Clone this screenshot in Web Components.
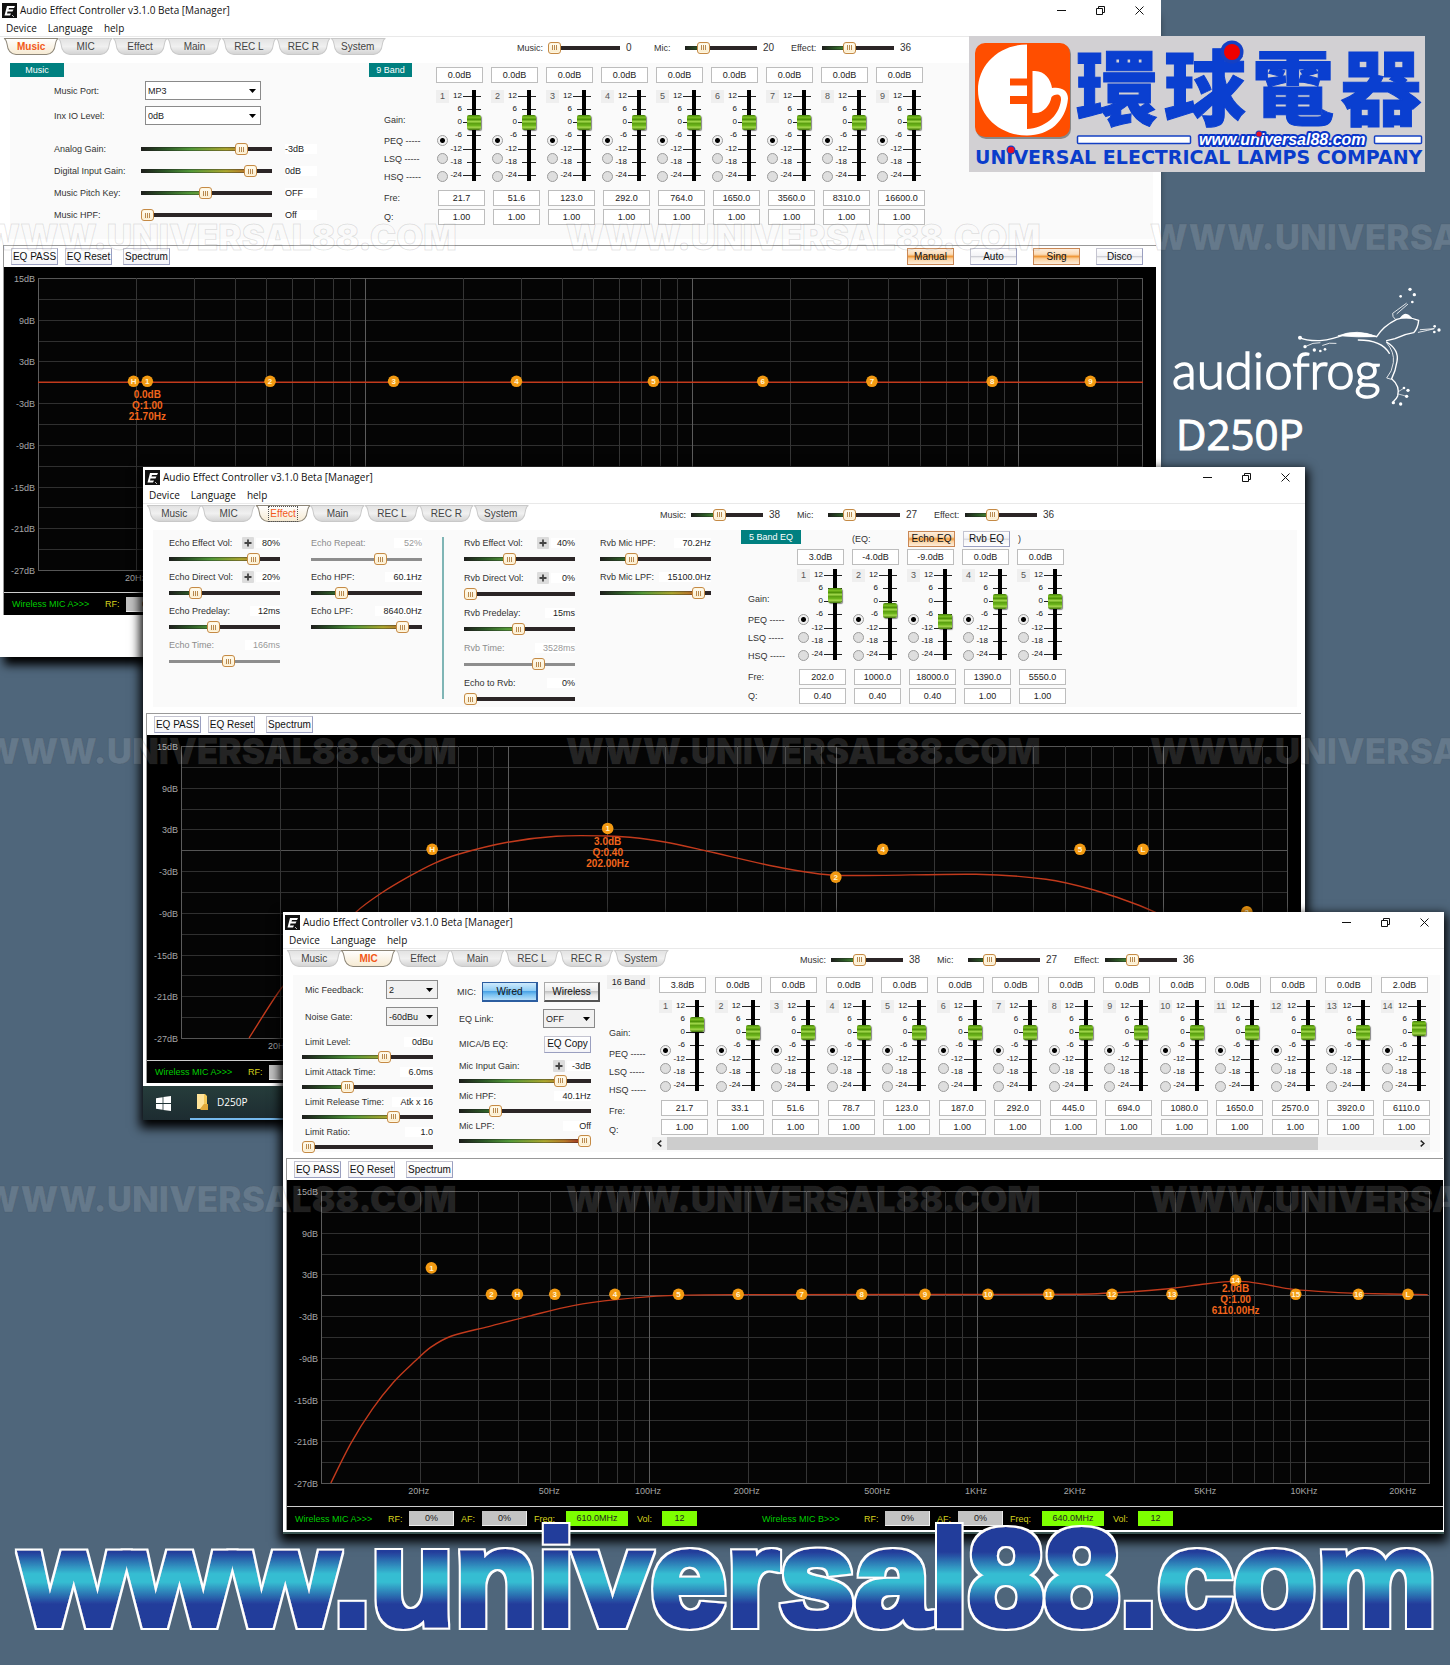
<!DOCTYPE html>
<html lang="en">
<head>
<meta charset="utf-8">
<meta name="viewport" content="width=device-width, initial-scale=1">
<title>Audio Effect Controller</title>
<style>
  html, body { margin: 0; }
  body { background: #4f667b; font-family: "Liberation Sans", Arial, sans-serif; color: #333; }
</style>
</head>
<body>
<fx-desktop></fx-desktop>

<template id="desktop-tpl">
  <style>
    :host { display: grid; position: relative; overflow: hidden; min-height: 100vh; grid-template-columns: minmax(0, 1fr); grid-template-rows: auto; }
    :host > * { grid-area: 1 / 1; }
    .w1 { margin: 0 289px 0 0; align-self: start; --shadow: 0 12px 9px -4px #000; --edge: 5px; --controls: 2px; --panel: 176px; }
    .w2 { margin: 467px 145px 0 143px; align-self: start; --edge: 4px; }
    .w3 { margin: 912px 6px 131px 283px; align-self: start; --edge: 1px; --plot: 326px; --status: 24px; --panel-right: 4px; }
    .side { justify-self: end; align-self: start; width: 282px; margin-top: 285px; display: flex; flex-direction: column; }
    .model { font: 400 42px/48px "Open Sans", sans-serif; color: #fff; margin: 0 0 0 8px; -webkit-text-stroke: 1px #fff; }
    brand-logo { justify-self: end; align-self: start; margin: 36px 25px 0 0; }
    site-banner { align-self: end; }
    fx-panel { align-self: stretch; }
    .col { display: flex; flex-direction: column; gap: var(--g, 2px); }
    .row { display: flex; align-items: center; }
    /* music window */
    .music { width: 359px; }
    .music .rows { display: flex; flex-direction: column; padding: 4px 0 0 44px; gap: 6px; }
    .music .levels { display: flex; flex-direction: column; gap: 2px; margin-top: 8px; }
    .w1 fx-bands { --band-gap: 6px; --label-width: 67px; --label-inset: 15px; height: 162px; }
    /* effect window */
    .effects { width: 588px; display: flex; padding: 5px 0 0 16px; box-sizing: border-box; }
    .w2 .col { width: 111px; }
    .w2 .c2 { margin-left: 31px; }
    .w2 .c3 { margin-left: 20px; --g: 3px; }
    .w2 .c4 { margin-left: 25px; }
    .rule { width: 2px; height: 162px; background: #7fb5b5; margin: 2px 0 0 20px; }
    .w2 .eq { flex: 1; }
    .eqhead { display: flex; align-items: center; height: 17px; font-size: 9px; margin-bottom: 5px; }
    .eqhead fx-badge { align-self: flex-start; }
    .eqhead .lead { margin: 0 38px 0 51px; width: 18px; }
    .eqhead fx-button { width: 47px; height: 16px; margin-right: 8px; }
    .w2 fx-bands { --band-gap: 3px; --label-width: 56px; --label-inset: 7px; height: 152px; }
    /* microphone window */
    .limit { width: 152px; padding: 5px 0 0 9px; box-sizing: border-box; --g: 0; --head: 15px; }
    .limit fx-select { margin: 0 0 8px 3px; --label: 81px; }
    .limit .col { width: 131px; }
    .mic { width: 153px; padding: 7px 0 0 8px; box-sizing: border-box; --head: 15px; --g: 0; }
    .mic .row { font-size: 9px; gap: 6px; height: 20px; }
    .mic .row fx-button { width: 56px; height: 20px; }
    .mic .row span { width: 19px; }
    .mic fx-select { margin: 7px 0 0 2px; --label: 84px; }
    .mic .copy span { flex: 1; }
    .mic .copy { margin: 6px 11px 4px 2px; }
    .mic .copy fx-button { width: 47px; height: 17px; }
    .mic .col { margin-left: 2px; width: 132px; }
    .sixteen { flex: 1; margin-left: 1px; }
    .w3 fx-bands { margin-right: 10px; --band-gap: 6px; --label-width: 52px; --label-inset: 2px; --label-drop: 3px; --spread: space-between; height: 160px; }
    .taskbar { height: 34px; background: linear-gradient(#263d3b, #1d2c31); display: flex; align-items: stretch; margin-top: 3px; font: 10px "Open Sans", sans-serif; color: #fff; }
    .taskbar svg { flex: none; align-self: center; }
    .taskbar .start { width: 47px; display: flex; justify-content: center; padding-right: 7px; box-sizing: border-box; }
    .taskbar .app { display: flex; align-items: center; gap: 7px; border-bottom: 2px solid #76b9ed; padding: 0 140px 0 6px; }
    .sliver { height: 2px; background: #3b5552; }
    .blank { height: 40px; }
  </style>

  <fx-window class="w1" tab="Music" header="0,20,36" header-pos="0,20,35">
    <fx-panel slot="panels">
      <div class="music">
        <fx-badge style="--w:54px">Music</fx-badge>
        <div class="rows">
          <fx-select label="Music Port:" value="MP3" style="--label:91px;--width:116px;--face:#fff"></fx-select>
          <fx-select label="Inx IO Level:" value="0dB" style="--label:91px;--width:116px;--face:#fff"></fx-select>
          <div class="levels">
            <fx-param row label="Analog Gain:" pos="80" value="-3dB"></fx-param>
            <fx-param row label="Digital Input Gain:" pos="87" value="0dB"></fx-param>
            <fx-param row label="Music Pitch Key:" pos="49" value="OFF"></fx-param>
            <fx-param row label="Music HPF:" pos="0" value="Off"></fx-param>
          </div>
        </div>
      </div>
      <fx-bands gains="0.0,0.0,0.0,0.0,0.0,0.0,0.0,0.0,0.0"
        freqs="21.7,51.6,123.0,292.0,764.0,1650.0,3560.0,8310.0,16600.0"
        qs="1.00,1.00,1.00,1.00,1.00,1.00,1.00,1.00,1.00"><fx-badge style="--w:43px">9 Band</fx-badge></fx-bands>
    </fx-panel>
    <fx-button slot="modes" on>Manual</fx-button>
    <fx-button slot="modes">Auto</fx-button>
    <fx-button slot="modes" on>Sing</fx-button>
    <fx-button slot="modes">Disco</fx-button>
    <fx-plot slot="plot" curve="0,0 3.381,0" active="1" tip="0.0dB|Q:1.00|21.70Hz"
      nodes="H:19.6:0 1:21.6:0 2:51.3:0 3:122.5:0 4:291:0 5:764:0 6:1650:0 7:3560:0 8:8310:0 9:16600:0"></fx-plot>
    <div class="blank" slot="footer"></div>
  </fx-window>

  <div class="side">
    <audiofrog-logo></audiofrog-logo>
    <p class="model">D250P</p>
  </div>

  <fx-window class="w2" tab="Effect" focus header="38,27,36" header-pos="38,25,36">
    <fx-panel slot="panels">
      <div class="effects">
        <div class="col">
          <fx-param label="Echo Effect Vol:" plus pos="80" value="80%"></fx-param>
          <fx-param label="Echo Direct Vol:" plus pos="20" value="20%"></fx-param>
          <fx-param label="Echo Predelay:" pos="39" value="12ms"></fx-param>
          <fx-param label="Echo Time:" off pos="54" value="166ms"></fx-param>
        </div>
        <div class="col c2">
          <fx-param label="Echo Repeat:" off pos="64" value="52%"></fx-param>
          <fx-param label="Echo HPF:" pos="24" value="60.1Hz"></fx-param>
          <fx-param label="Echo LPF:" pos="87" value="8640.0Hz"></fx-param>
        </div>
        <div class="rule"></div>
        <div class="col c3">
          <fx-param label="Rvb Effect Vol:" plus pos="40" value="40%"></fx-param>
          <fx-param label="Rvb Direct Vol:" plus pos="0" value="0%"></fx-param>
          <fx-param label="Rvb Predelay:" pos="49" value="15ms"></fx-param>
          <fx-param label="Rvb Time:" off pos="69" value="3528ms"></fx-param>
          <fx-param label="Echo to Rvb:" pos="0" value="0%"></fx-param>
        </div>
        <div class="col c4">
          <fx-param label="Rvb Mic HPF:" pos="26" value="70.2Hz"></fx-param>
          <fx-param label="Rvb Mic LPF:" pos="94" value="15100.0Hz"></fx-param>
        </div>
      </div>
      <div class="eq">
        <div class="eqhead"><fx-badge style="--w:60px">5 Band EQ</fx-badge><span class="lead">(EQ:</span><fx-button on>Echo EQ</fx-button><fx-button>Rvb EQ</fx-button><span>)</span></div>
        <fx-bands gains="3.0,-4.0,-9.0,0.0,0.0" freqs="202.0,1000.0,18000.0,1390.0,5550.0" qs="0.40,0.40,0.40,1.00,1.00"></fx-bands>
      </div>
    </fx-panel>
    <fx-plot slot="plot" active="1" tip="3.0dB|Q:0.40|202.00Hz"
      curve=".208,-27 .3115,-19.55 .535,-8.87 .61,-6.22 .698,-3.73 .772,-1.91 .847,-.57 .997,1.15 1.146,2.02 1.301,2.06 1.371,1.87 1.477,1.2 1.605,-.1 1.83,-2.48 1.998,-3.6 2.428,-3.45 2.642,-4.17 2.786,-5.68 2.917,-7.76 3,-9.4"
      nodes="H:58.5:0 1:201:3 2:1000:-4 3:18000:-9 4:1390:0 5:5570:0 L:8670:0"></fx-plot>
    <div class="taskbar" slot="footer">
      <div class="start"><svg width="15" height="15" viewBox="0 0 15 15" fill="#fff"><path d="M0 2.2 6.6 1.2V7H0zM7.4 1.1 15 0v7H7.4zM0 7.9h6.6v5.9L0 12.8zM7.4 7.9H15V15l-7.6-1.1z"/></svg></div>
      <div class="app"><svg width="14" height="18" viewBox="0 0 14 18"><path d="M1 1h8l2 2v13H1z" fill="#f5c95b"/><path d="M1 1h7v10l-4 5H1z" fill="#ffe399"/><path d="M4 16l4-5h4v6H5z" fill="#e2a93a"/></svg><span>D250P</span></div>
    </div>
  </fx-window>

  <fx-window class="w3" tab="MIC" header="38,27,36" header-pos="38,25,36">
    <fx-panel slot="panels" style="--gap:4px">
      <div class="limit">
        <fx-select label="Mic Feedback:" value="2"></fx-select>
        <fx-select label="Noise Gate:" value="-60dBu"></fx-select>
        <div class="col">
          <fx-param inset label="Limit Level:" pos="64" value="0dBu"></fx-param>
          <fx-param inset label="Limit Attack Time:" pos="33" value="6.0ms"></fx-param>
          <fx-param inset label="Limit Release Time:" pos="72" value="Atk x 16"></fx-param>
          <fx-param inset label="Limit Ratio:" pos="0" value="1.0"></fx-param>
        </div>
      </div>
      <div class="mic">
        <div class="row"><span>MIC:</span><fx-button kind="wired">Wired</fx-button><fx-button kind="wireless">Wireless</fx-button></div>
        <fx-select label="EQ Link:" value="OFF"></fx-select>
        <div class="row copy"><span>MICA/B EQ:</span><fx-button plain>EQ Copy</fx-button></div>
        <div class="col">
          <fx-param plus label="Mic Input Gain:" pos="80" value="-3dB"></fx-param>
          <fx-param label="Mic HPF:" pos="25" value="40.1Hz"></fx-param>
          <fx-param label="Mic LPF:" pos="100" value="Off"></fx-param>
        </div>
      </div>
      <div class="sixteen">
        <fx-bands gains="3.8,0.0,0.0,0.0,0.0,0.0,0.0,0.0,0.0,0.0,0.0,0.0,0.0,2.0"
          freqs="21.7,33.1,51.6,78.7,123.0,187.0,292.0,445.0,694.0,1080.0,1650.0,2570.0,3920.0,6110.0"
          qs="1.00,1.00,1.00,1.00,1.00,1.00,1.00,1.00,1.00,1.00,1.00,1.00,1.00,1.00"><fx-badge style="--w:43px;--face:#f0f0f0;--ink:#222">16 Band</fx-badge></fx-bands>
        <fx-scroller></fx-scroller>
      </div>
    </fx-panel>
    <fx-plot slot="plot" active="14" tip="2.0dB|Q:1.00|6110.00Hz" tip-offset="8"
      curve=".03,-27 .091,-21.3 .157,-16.35 .221,-12.5 .286,-9.5 .334,-7.5 .398,-5.86 .511,-4.5 .641,-2.92 .769,-1.49 .9,-.63 1.06,-.05 1.27,.09 2.3,.15 2.462,.48 2.584,.95 2.695,1.63 2.766,1.96 2.817,1.96 2.878,1.57 2.948,.95 3.04,.56 3.16,.28 3.374,.09"
      nodes="1:21.7:3.8 2:33.1:0 H:39.7:0 3:51.6:0 4:78.7:0 5:123:0 6:187:0 7:292:0 8:445:0 9:694:0 10:1080:0 11:1655:0 12:2580:0 13:3930:0 14:6140:2 15:9370:0 16:14550:0 L:20600:0"></fx-plot>
    <div class="sliver" slot="footer"></div>
  </fx-window>

  <fx-watermark></fx-watermark>
  <brand-logo></brand-logo>
  <site-banner></site-banner>
</template>

<script>
const define = (name, html, setup) => customElements.define(name, class extends HTMLElement {
  connectedCallback() {
    if (this.shadowRoot) return;
    const root = this.attachShadow({ mode: 'open' });
    root.innerHTML = typeof html === 'function' ? html(this) : html;
    if (setup) setup(this, root);
  }
});
const list = (el, name) => (el.getAttribute(name) || '').split(',').filter(Boolean);

const SLIDER_CSS = `
  input[type=range] { -webkit-appearance: none; appearance: none; display: block; width: 100%; height: 12px; margin: 0; cursor: pointer;
    background:
      linear-gradient(90deg, transparent var(--p), #2b2526 var(--p)) center / 100% 4px no-repeat,
      linear-gradient(#2229, transparent 45%, transparent 60%, #2229) center / 100% 4px no-repeat,
      linear-gradient(90deg, #1d1d1b 0, #2c5a26 18%, #55a03a 38%, #b3ad2f 65%, #bf7d29 80%, #a11f1f 96%) center / 100% 4px no-repeat; }
  input[type=range]::-webkit-slider-runnable-track { height: 12px; background: none; }
  input[type=range]::-webkit-slider-thumb { -webkit-appearance: none; width: 13px; height: 12px; box-sizing: border-box; border: 1px solid #c58a45; border-radius: 3px;
    background:
      linear-gradient(90deg, #b8894f 1px, #0000 1px, #0000 2px, #b8894f 2px, #b8894f 3px, #0000 3px, #0000 4px, #b8894f 4px) center / 5px 5px no-repeat,
      linear-gradient(#fffdf4, #fbeccb); box-shadow: inset 0 0 0 1px #fff6df; }
  input[type=range]:disabled { background: linear-gradient(#8d8d8d, #8d8d8d) center / 100% 3px no-repeat; }
`;
const range = (id, pos, off) => `<input type="range" id="${id}" min="0" max="100" value="${pos}" style="--p:${pos}%"${off ? ' disabled' : ''}>`;

define('fx-desktop', '', (el, root) => root.append(document.getElementById('desktop-tpl').content.cloneNode(true)));

define('fx-panel', `<style>
  :host { display: flex; gap: var(--gap, 0); background: #fafafa; margin: 0 var(--panel-right, 8px) 6px 10px; height: var(--panel, 177px); }
</style><slot></slot>`);

define('fx-badge', `<style>
  :host { display: block; width: var(--w); background: var(--face, #008080); color: var(--ink, #fff); font-size: 9px; line-height: 14px; text-align: center; white-space: nowrap; }
</style><slot></slot>`);

define('fx-button', `<style>
  :host { display: block; width: 47px; height: 17px; }
  button { width: 100%; height: 100%; box-sizing: border-box; padding: 0; display: flex; align-items: center; justify-content: center; white-space: nowrap;
    font: 10px/12px "Liberation Sans", Arial, sans-serif; color: #111; border: 1px solid #9a9fc0; border-top-color: #c4c4d0; border-left-color: #c4c4d0;
    background: linear-gradient(#fff, #f3f3f6 45%, #cfd0d6 50%, #f4f4f6 60%, #fff); }
  :host([plain]) button { background: linear-gradient(#fff, #f4f4f8); }
  :host([on]) button { border-color: #c98755; background: linear-gradient(#fdeedd, #fbdcb8 35%, #f0993a 50%, #fbd09c 65%, #fdeedd); }
  :host([kind=wired]) button { border: 1px solid #2b5da0; border-width: 1px 2px 2px 1px; background: linear-gradient(#cfeafc, #8fcdf5 45%, #4aa3e6 50%, #7cc3f2 70%, #b8e0fa); }
  :host([kind=wireless]) button { border: 1px solid #8f8f8f; border-width: 1px 2px 2px 1px; border-color: #aaa #555 #555 #aaa; background: linear-gradient(#fdfdfd, #ececec 45%, #c4c4c4 50%, #e8e8e8 70%, #fafafa); }
</style><button type="button"><slot></slot></button>`);

define('fx-select', el => `<style>
  :host { display: grid; grid-template-columns: var(--label) var(--width, 52px); align-items: center; font-size: 9px; height: 19px; }
  label { white-space: nowrap; }
  .box { display: grid; align-items: center; }
  .box > * { grid-area: 1 / 1; }
  select { -webkit-appearance: none; appearance: none; width: 100%; height: 19px; border: 1px solid #8a8a8a; border-radius: 0; background: var(--face, #f1f1f1); color: #222;
    font: 9px "Liberation Sans", Arial, sans-serif; padding: 0 2px; margin: 0; }
  svg { justify-self: end; margin-right: 5px; pointer-events: none; }
</style><label for="s">${el.getAttribute('label')}</label>
<div class="box"><select id="s"><option>${el.getAttribute('value')}</option></select><svg width="7" height="4" viewBox="0 0 7 4"><path d="M0 0h7L3.5 4z"/></svg></div>`);

define('fx-param', el => {
  const a = n => el.getAttribute(n), off = el.hasAttribute('off');
  return `<style>
  :host { display: block; font-size: 9px; white-space: nowrap; }
  :host([off]) { color: #8c8c8c; }
  .head { display: flex; align-items: center; height: var(--head, 16px); }
  .track { display: flex; align-items: center; height: var(--head, 16px); }
  label { flex: 1; }
  output { color: #222; background: #fff; padding-left: 8px; min-width: 20px; text-align: right; }
  :host([plus]) output { padding-left: 4px; }
  :host([off]) output { color: #999; }
  button { width: 12px; height: 12px; padding: 0; border: 0; border-radius: 1px; background: #dcdcdc; display: grid; place-items: center; margin-right: 2px; }
  :host([row]) { display: grid; grid-template-columns: 87px 131px 32px; align-items: center; height: 20px; }
  :host([row]) .head, :host([row]) .track { display: contents; }
  :host([row]) output { text-align: left; padding: 0; margin-left: 13px; order: 3; width: 32px; }
  :host([inset]) label { padding-left: 3px; }
  ${SLIDER_CSS}
  </style>
  <div class="head"><label for="r">${a('label')}</label>${el.hasAttribute('plus') ? '<button type="button" aria-label="Increase"><svg width="8" height="8" viewBox="0 0 8 8"><path d="M4 .5v7M.5 4h7" stroke="#444" stroke-width="1.8"/></svg></button>' : ''}<output for="r">${a('value')}</output></div>
  <div class="track">${range('r', a('pos'), off)}</div>`;
});

const TICKS = [7, 20, 33, 46, 60, 73, 86].map((y, i) => `<path d="M${i % 2 ? 5 : 1} ${y}.5H19"/>`).join('');
define('fx-band', el => {
  const a = k => el.getAttribute(k), n = a('n');
  return `<style>
  :host { display: block; width: 49px; flex: none; }
  input[type=text] { display: block; width: 47px; height: 16px; box-sizing: border-box; border: 1px solid #bdbdbd; background: #fff; color: #222; padding: 0;
    font: 9px "Liberation Sans", Arial, sans-serif; text-align: center; }
  input.gain { margin: 0 0 var(--band-gap); }
  input.fre { margin: 8px 0 3px 2px; }
  input.q { margin: 0 0 0 2px; }
  .mid { display: grid; grid-template-columns: 13px 13px 19px; height: 93px; }
  .lane { display: flex; flex-direction: column; align-items: center; padding-top: 1px; }
  .lane b { width: 13px; font: 9px/13px "Liberation Sans", Arial, sans-serif; text-align: center; color: #555; background: #efefef; margin-bottom: 32px; align-self: flex-start; white-space: nowrap; }
  input[type=radio] { -webkit-appearance: none; appearance: none; width: 11px; height: 11px; box-sizing: border-box; border: 1px solid #9c9c9c; border-radius: 50%; margin: 0 0 7px; background: #dedede; flex: none; }
  input[type=radio]:checked { background: radial-gradient(circle, #000 2px, #f2f2f2 3px); }
  .scale { display: flex; flex-direction: column; justify-content: space-between; align-items: flex-end; padding: 2px 0; font-size: 8px; line-height: 10px; height: 89px; color: #111; }
  .fader { display: grid; }
  .fader > * { grid-area: 1 / 1; }
  svg { stroke: #222; }
  .fader input { writing-mode: vertical-lr; direction: rtl; -webkit-appearance: none; appearance: none; width: 14px; height: 93px; margin: 0 0 0 5px;
    background: linear-gradient(#000, #000) center / 4px 91px no-repeat; }
  .fader input::-webkit-slider-runnable-track { width: 14px; height: 93px; background: none; }
  .fader input::-webkit-slider-thumb { -webkit-appearance: none; width: 14px; height: 15px; border-radius: 2px;
    background: linear-gradient(#3f7a07, #7cc022 15%, #4f9308 30%, #a6dc4f 45%, #5a9e10 55%, #6cb41c 70%, #a2d84a 82%, #3b6f08); box-shadow: 1px 1px 1px #0007; }
</style>
<input class="gain" type="text" aria-label="Band ${n} gain" value="${a('gain')}dB">
<div class="mid">
  <div class="lane"><b>${n}</b>${['PEQ', 'LSQ', 'HSQ'].map((t, i) => `<input type="radio" name="type" aria-label="${t}"${i ? '' : ' checked'}>`).join('')}</div>
  <div class="scale">${['12', '6', '0', '-6', '-12', '-18', '-24'].map(t => `<span>${t}</span>`).join('')}</div>
  <div class="fader"><svg width="19" height="93">${TICKS}</svg><input type="range" aria-label="Band ${n} fader" min="-24" max="12" step="0.1" value="${a('gain')}"></div>
</div>
<input class="fre" type="text" aria-label="Band ${n} frequency" value="${a('fre')}">
<input class="q" type="text" aria-label="Band ${n} Q" value="${a('q')}">`;
});

define('fx-bands', el => {
  const g = list(el, 'gains'), f = list(el, 'freqs'), q = list(el, 'qs');
  return `<style>
  :host { display: flex; align-items: stretch; }
  .names { width: var(--label-width); display: flex; flex-direction: column; justify-content: space-between; font-size: 9px; }
  .names ul { list-style: none; margin: 0 0 calc(0px - var(--label-drop, 0px)); padding: 22px 0 0 var(--label-inset); line-height: 18px; height: 114px; white-space: nowrap; }
  li:first-child { margin-bottom: 3px; }
  li:nth-child(5) { line-height: 22px; margin-top: 1px; }
  li:last-child { line-height: 16px; }
  .cols { flex: 1; display: flex; gap: 6px; align-items: flex-end; justify-content: var(--spread, flex-start); }
</style><div class="names"><div><slot></slot></div><ul><li>Gain:</li><li>PEQ -----</li><li>LSQ -----</li><li>HSQ -----</li><li>Fre:</li><li>Q:</li></ul></div>
<div class="cols">${g.map((v, i) => `<fx-band n="${i + 1}" gain="${v}" fre="${f[i]}" q="${q[i]}"></fx-band>`).join('')}</div>`;
});

define('fx-scroller', `<style>
  :host { display: flex; margin: 2px 10px 0 45px; height: 13px; background: #f0f0f0; }
  button { width: 15px; border: 0; padding: 0; background: none; display: grid; place-items: center; }
  .rail { flex: 1; display: flex; }
  .thumb { width: 87%; background: #cdcdcd; }
</style><button type="button" aria-label="Scroll left"><svg width="5" height="7" viewBox="0 0 5 7" fill="none" stroke="#222" stroke-width="1.5"><path d="M4.3.6 1 3.5l3.3 2.9"/></svg></button>
<div class="rail"><div class="thumb"></div></div>
<button type="button" aria-label="Scroll right"><svg width="5" height="7" viewBox="0 0 5 7" fill="none" stroke="#222" stroke-width="1.5"><path d="M.7.6 4 3.5.7 6.4"/></svg></button>`);

define('fx-status', el => {
  const group = (n, freq) => `<div class="g"><span class="name">Wireless MIC ${n}&gt;&gt;&gt;</span><span class="k rf">RF:</span><output>0%</output><span class="k af">AF:</span><output>0%</output><span class="k fq">Freq:</span><output class="on w">${freq}</output><span class="k vo">Vol:</span><output class="on v">12</output></div>`;
  return `<style>
  :host { display: flex; gap: 65px; align-items: center; height: var(--status, 23px); box-sizing: border-box; border-top: 1px solid #ccc; background: #000; padding-left: 8px; font-size: 9px; overflow: hidden; white-space: nowrap; }
  .g { display: flex; align-items: center; height: 15px; }
  .g:last-child .name { width: 102px; }
  .name { color: #0c0; width: 93px; }
  .k { color: #d6d21c; }
  .rf { width: 21px; } .af { width: 21px; margin-left: 7px; } .fq { width: 32px; margin-left: 7px; } .vo { width: 25px; margin-left: 9px; }
  output { width: 45px; box-sizing: border-box; line-height: 15px; background: #c3c3c3; color: #222; text-align: center; box-shadow: inset -1px -1px #eee; }
  output.on { background: #7dff00; box-shadow: none; }
  output.w { width: 62px; } output.v { width: 35px; }
</style>${group('A', '610.0MHz')}${group('B', '640.0MHz')}`;
});

define('fx-plot', `<style>
  :host { display: block; height: var(--plot, 325px); background: #000; overflow: hidden; }
  svg { display: block; }
  text { font-family: "Liberation Sans", Arial, sans-serif; font-size: 9px; fill: #a5a5a5; }
  .tip { font-size: 10px; font-weight: 700; fill: #f2651c; text-anchor: middle; }
  .n { font-size: 8px; font-weight: 700; fill: #fff2cf; text-anchor: middle; }
  .hz { text-anchor: middle; }
  .db { text-anchor: end; }
</style><svg height="325" role="img" aria-label="Equaliser response"></svg>`, (el, root) => {
  const svg = root.querySelector('svg'), L = 34, T = 11, H = 292;
  const y = db => T + (15 - db) * H / 42;
  const draw = () => {
    const w = el.clientWidth; if (!w) return;
    svg.setAttribute('width', w);
    const R = w - 13, dec = (R - L) / 3.381, x = d => L + d * dec, fx = hz => x(Math.log10(hz / 10));
    let s = `<rect x="${L}" y="${T}" width="${R - L}" height="${H}" fill="#050505"/>`;
    for (let i = 0; i <= 14; i++) {
      const yy = Math.round(y(15 - 3 * i)) + .5;
      s += `<path d="M${L} ${yy}H${R}" stroke="${i === 14 || i === 0 || i === 5 ? '#555' : '#303030'}"/>`;
      if (i % 2 === 0) s += `<text class="db" x="${L - 3}" y="${yy + 3}">${15 - 3 * i}dB</text>`;
    }
    const line = hz => s += `<path d="M${Math.round(fx(hz)) + .5} ${T}V${T + H}" stroke="${hz === 10 || hz === 100 || hz === 1000 || hz === 10000 ? '#5c5c5c' : '#353535'}"/>`;
    for (const base of [10, 100, 1000]) for (let k = 1; k < 10; k++) line(base * k);
    line(10000); line(20000);
    s += `<path d="M${R - .5} ${T}V${T + H}" stroke="#555"/>`;
    for (const hz of [20, 50, 100, 200, 500, 1000, 2000, 5000, 10000, 20000])
      s += `<text class="hz" x="${fx(hz) - 1}" y="314">${hz < 1000 ? hz + 'Hz' : hz / 1000 + 'KHz'}</text>`;
    const pts = el.getAttribute('curve').split(' ').map(p => { const [a, b] = p.split(',').map(Number); return [x(a), y(b)]; });
    let path = 'M' + pts[0];
    for (let i = 0; i < pts.length - 1; i++) {
      const p0 = pts[i - 1] || pts[i], p1 = pts[i], p2 = pts[i + 1], p3 = pts[i + 2] || p2;
      const f = Math.min(1, (p2[0] - p1[0]) / Math.max(1, p1[0] - p0[0])) / 6, g = Math.min(1, (p2[0] - p1[0]) / Math.max(1, p3[0] - p2[0])) / 6;
      path += `C${p1[0] + (p2[0] - p0[0]) * f} ${p1[1] + (p2[1] - p0[1]) * f} ${p2[0] - (p3[0] - p1[0]) * g} ${p2[1] - (p3[1] - p1[1]) * g} ${p2}`;
    }
    s += `<path d="${path}" fill="none" stroke="#c23a1c" stroke-width="1.4"/>`;
    for (const node of el.getAttribute('nodes').split(' ')) {
      const [n, hz, db] = node.split(':'), cx = fx(+hz), cy = y(+db) - 1;
      s += `<circle cx="${cx}" cy="${cy}" r="5.8" fill="#f39a12"/><text class="n" x="${cx}" y="${cy + 3}">${n}</text>`;
      if (n === el.getAttribute('active')) {
        const o = +(el.getAttribute('tip-offset') || 13);
        el.getAttribute('tip').split('|').forEach((t, i) => s += `<text class="tip" x="${cx}" y="${cy + o + 4 + i * 11}">${t}</text>`);
      }
    }
    svg.innerHTML = s;
  };
  draw();
  new ResizeObserver(draw).observe(el);
});

const TABS = ['Music', 'MIC', 'Effect', 'Main', 'REC L', 'REC R', 'System'];
define('fx-window', el => {
  const vals = list(el, 'header'), pos = list(el, 'header-pos');
  return `<style>
  :host { display: block; background: #fff; box-shadow: var(--shadow, 0 5px 10px 3px #000); }
  header { display: flex; align-items: center; height: 20px; font: 10px "Open Sans", sans-serif; color: #111; padding-left: 2px; }
  header span { flex: 1; padding-left: 3px; }
  header button { width: 39px; height: 18px; border: 0; background: none; padding: 0; display: grid; place-items: center; }
  header button:last-child { margin-right: var(--controls, 0); }
  nav.menu { display: flex; gap: 11px; height: 16px; align-items: center; padding-left: 6px; font: 10px/16px "Open Sans", sans-serif; border-bottom: 1px solid #e9e9e9; }
  nav.menu a { color: #111; text-decoration: none; }
  .strip { display: flex; padding: 1px 0 7px 4px; height: 18px; }
  .tabs { display: flex; width: 381px; }
  .tabs button { flex: 1; display: grid; padding: 0; border: 0; background: none; font: 10px/18px "Liberation Sans", Arial, sans-serif; color: #444; }
  .tabs button > * { grid-area: 1 / 1; }
  .tabs svg { width: 100%; height: 18px; overflow: visible; fill: url(#g); stroke: #c9c9c9; }
  .tabs .sel { color: #f2591a; font-weight: 700; }
  .tabs .sel svg { fill: url(#h); stroke: #8d8678; }
  .tabs em { font-style: normal; justify-self: center; align-self: center; line-height: 14px; padding: 0 1px; }
  :host([focus]) .sel em { outline: 1px dotted #555; font-weight: 400; }
  .lv { display: flex; gap: 14px; margin-left: 132px; font-size: 9px; }
  .lv div { display: grid; grid-template-columns: 31px 72px 20px; align-items: center; height: 19px; white-space: nowrap; }
  .lv output { font-size: 10px; padding-left: 6px; }
  .lower { margin: 0 var(--edge) 2px 3px; border: 1px solid #999; border-width: 1px 0 0 1px; }
  .tools { display: flex; height: 21px; align-items: center; padding: 0 13px 0 7px; }
  .tools fx-button:nth-child(2) { margin: 0 11px 0 7px; }
  .modes { margin-left: auto; display: flex; gap: 16px; }
  ${SLIDER_CSS}
</style>
<header><svg width="15" height="15" viewBox="0 0 15 15"><rect width="15" height="15" fill="#111"/><path d="M5 3h8l-1 2H7L6.500 6.500h5l-1 2h-5L5 10.500h4l-1 2H2.500z" fill="#fff"/><path d="M10 12l2 2" stroke="#bbb"/></svg><span>Audio Effect Controller v3.1.0 Beta [Manager]</span>
  <button type="button" aria-label="Minimize"><svg width="9" height="9"><path d="M0 4.500h9" stroke="#111"/></svg></button>
  <button type="button" aria-label="Restore"><svg width="9" height="9" fill="none" stroke="#111"><path d="M.5 2.500h6v6h-6zM2.500 2.500v-2h6v6h-2"/></svg></button>
  <button type="button" aria-label="Close"><svg width="9" height="9" fill="none" stroke="#111"><path d="M.5.5l8 8M8.500.5l-8 8"/></svg></button></header>
<nav class="menu"><a href="#device">Device</a><a href="#language">Language</a><a href="#help">help</a></nav>
<div class="strip"><div class="tabs" role="tablist">${TABS.map(t => `<button type="button" role="tab" class="${t === el.getAttribute('tab') ? 'sel' : ''}"><svg viewBox="0 0 54 18" preserveAspectRatio="none"><defs><linearGradient id="g" x2="0" y2="1"><stop stop-color="#e2e2e2"/><stop offset=".5" stop-color="#f0f0f0"/><stop offset="1" stop-color="#d2d2d2"/></linearGradient><linearGradient id="h" x2="0" y2="1"><stop stop-color="#fff"/><stop offset="1" stop-color="#f6ead2"/></linearGradient></defs><path d="M0 .5Q2 1 3 6Q4 16 12 16.500H42Q50 16 51 6Q52 1 54 .5Z"/></svg><em>${t}</em></button>`).join('')}</div>
  <div class="lv">${['Music:', 'Mic:', 'Effect:'].map((t, i) => `<div><label for="v${i}">${t}</label>${range('v' + i, pos[i])}<output for="v${i}">${vals[i]}</output></div>`).join('')}</div></div>
<slot name="panels"></slot>
<div class="lower"><div class="tools"><fx-button plain>EQ PASS</fx-button><fx-button plain>EQ Reset</fx-button><fx-button plain>Spectrum</fx-button><div class="modes"><slot name="modes"></slot></div></div>
<slot name="plot"></slot><fx-status></fx-status></div>
<slot name="footer"></slot>`;
});

define('fx-watermark', `<style>
  :host { display: block; position: absolute; inset: 0; overflow: hidden; pointer-events: none; font: 900 35px/36px Inter, sans-serif; color: rgba(255,255,255,.13); -webkit-text-stroke: 1px rgba(60,60,60,.14); }
  div { display: flex; white-space: nowrap; margin-left: -18px; }
  span { flex: none; width: 584px; }
  div:nth-of-type(1) { margin-top: 219px; }
  div:nth-of-type(2) { margin-top: 478px; }
  div:nth-of-type(3) { margin-top: 412px; }
</style>` + '<div><span>WWW.UNIVERSAL88.COM</span><span>WWW.UNIVERSAL88.COM</span><span>WWW.UNIVERSAL88.COM</span></div>'.repeat(3));

define('brand-logo', `<style>
  :host { display: block; width: 456px; height: 136px; background: #d2d0d3; z-index: 1; }
  svg { display: block; }
  .cjk { font: 900 82px "Noto Sans CJK TC", sans-serif; fill: #0a3fd0; stroke: #0a3fd0; stroke-width: 1; }
  .url { font: italic 700 16px "Liberation Sans", Arial, sans-serif; fill: #fff; stroke: #0a35c8; stroke-width: 4; paint-order: stroke; stroke-linejoin: round; }
  .co { font: 700 19px "DejaVu Sans", sans-serif; fill: #0a3ccb; }
</style><svg width="456" height="136" viewBox="0 0 456 136" role="img" aria-label="Universal Electrical Lamps Company">
  <rect x="7" y="8" width="95" height="95" rx="10" fill="#888"/>
  <rect x="6" y="7" width="95" height="94" rx="10" fill="#ff4e00"/>
  <path d="M58 8.500C30 8.500 9 29 9 54s21 45.500 49 45.500c22 0 39-14 41-37 0-9-8-12-16-10.500C82 44 76 35 66 35h-2.500v42H66c9 0 15-8 16.500-16 5-4 10-3 9.500 3-2 17-17 28-34 29z" fill="#fff"/>
  <path d="M41 42.500h17v7H41zM41 60h17v8H41z" fill="#ff4e00"/>
  <text class="cjk" y="83" x="107 195 283 371">環球電器</text>
  <circle cx="263" cy="16" r="11.500" fill="#1440c4"/><circle cx="263" cy="16" r="8" fill="#f00000"/>
  <rect x="108.500" y="100" width="113" height="7.500" rx="1" fill="#fff" stroke="#1440c4" stroke-width="1.500"/>
  <rect x="405.500" y="100" width="47" height="7.500" rx="1" fill="#fff" stroke="#1440c4" stroke-width="1.500"/>
  <text class="url" x="230" y="109">www.universal88.com</text>
  <text class="co" x="6" y="128">UNIVERSAL ELECTRICAL LAMPS COMPANY</text>
  <circle cx="42" cy="114" r="4.500" fill="#1440c4"/><circle cx="42" cy="114" r="3.300" fill="#e8102a"/>
  <circle cx="290" cy="98" r="3.500" fill="#1440c4"/><circle cx="290" cy="98" r="2.600" fill="#e8102a"/>
</svg>`);

define('audiofrog-logo', `<style>
  :host { display: block; height: 125px; }
  svg { display: block; overflow: visible; }
  text { font: 300 51px Lato, sans-serif; fill: #fff; stroke: #fff; stroke-width: 1.5; }
</style><svg width="277" height="125" viewBox="0 0 277 125" role="img" aria-label="audiofrog">
  <text x="4" y="104">audiofrog</text>
  <g transform="translate(-218 -265) scale(.33333)" fill="none" stroke="#fff" stroke-width="4" stroke-linecap="round">
    <path d="M1048 952q20 11 62 10q40-4 75-19q40-9 95 7q20-32 60-52q34-10 66 3q-2 24-15 37q-28 4-56 18l-25 6"/>
    <path d="M1165 947q56-22 116 3q-56 3-116-3z" fill="#fff" stroke-width="2"/>
    <path d="M1353 893q14-20 30 0z" fill="#fff"/>
    <path d="M1369 850l-41 30q-2 10 8 18M1373 853l-32 28" stroke-width="2.500"/>
    <path d="M1405 937q30-6 48-11l-42 3" stroke-width="2.500"/>
    <path d="M1065 980q25-14 45-12M1118 976q20-10 40-6" stroke-width="2.500"/>
    <path d="M1225 960q70 0 93 40M1310 966q38 24 31 58q-4 28-16 52q26 22 18 52q-3 8-12 16" />
    <path d="M1310 968q24 28 20 60q-3 26-20 46l14 4" stroke-width="2.500"/>
    <path d="M1345 1115l16-10M1345 1122l22 6" stroke-width="2"/>
    <g fill="#fff" stroke="none"><circle cx="1380" cy="808" r="5"/><circle cx="1393" cy="824" r="5"/><circle cx="1352" cy="829" r="4"/><circle cx="1387" cy="846" r="4"/>
    <circle cx="1454" cy="919" r="4"/><circle cx="1467" cy="930" r="5"/><circle cx="1453" cy="936" r="4"/><circle cx="1050" cy="953" r="6"/><circle cx="1065" cy="980" r="5"/><circle cx="1093" cy="990" r="5"/><circle cx="1111" cy="993" r="4"/><circle cx="1125" cy="988" r="4"/>
    <circle cx="1362" cy="1104" r="4"/><circle cx="1374" cy="1111" r="5"/><circle cx="1370" cy="1129" r="5"/><circle cx="1330" cy="1148" r="5"/><circle cx="1352" cy="1152" r="5"/></g>
  </g>
</svg>`);

define('site-banner', `<style>
  :host { display: block; z-index: 1; }
  svg { display: block; width: 100%; overflow: visible; }
  text { font: 700 136px "Liberation Sans", Arial, sans-serif; fill: url(#b); stroke: url(#b); stroke-width: 6; filter: url(#o); }
</style><svg viewBox="0 0 1450 145" role="img" aria-label="www.universal88.com">
  <defs>
    <linearGradient id="b" gradientUnits="userSpaceOnUse" x1="0" y1="32" x2="0" y2="84"><stop stop-color="#243c9b"/><stop offset=".42" stop-color="#36bdd2"/><stop offset=".58" stop-color="#36bdd2"/><stop offset="1" stop-color="#243c9b"/></linearGradient>
    <filter id="o" x="-2%" y="-10%" width="104%" height="120%"><feMorphology in="SourceAlpha" operator="dilate" radius="2" result="d"/><feFlood flood-color="#fff"/><feComposite in2="d" operator="in"/><feMerge><feMergeNode/><feMergeNode in="SourceGraphic"/></feMerge></filter>
  </defs>
  <text x="21" y="105">www.universal88.com</text>
</svg>`);
</script>
</body>
</html>
